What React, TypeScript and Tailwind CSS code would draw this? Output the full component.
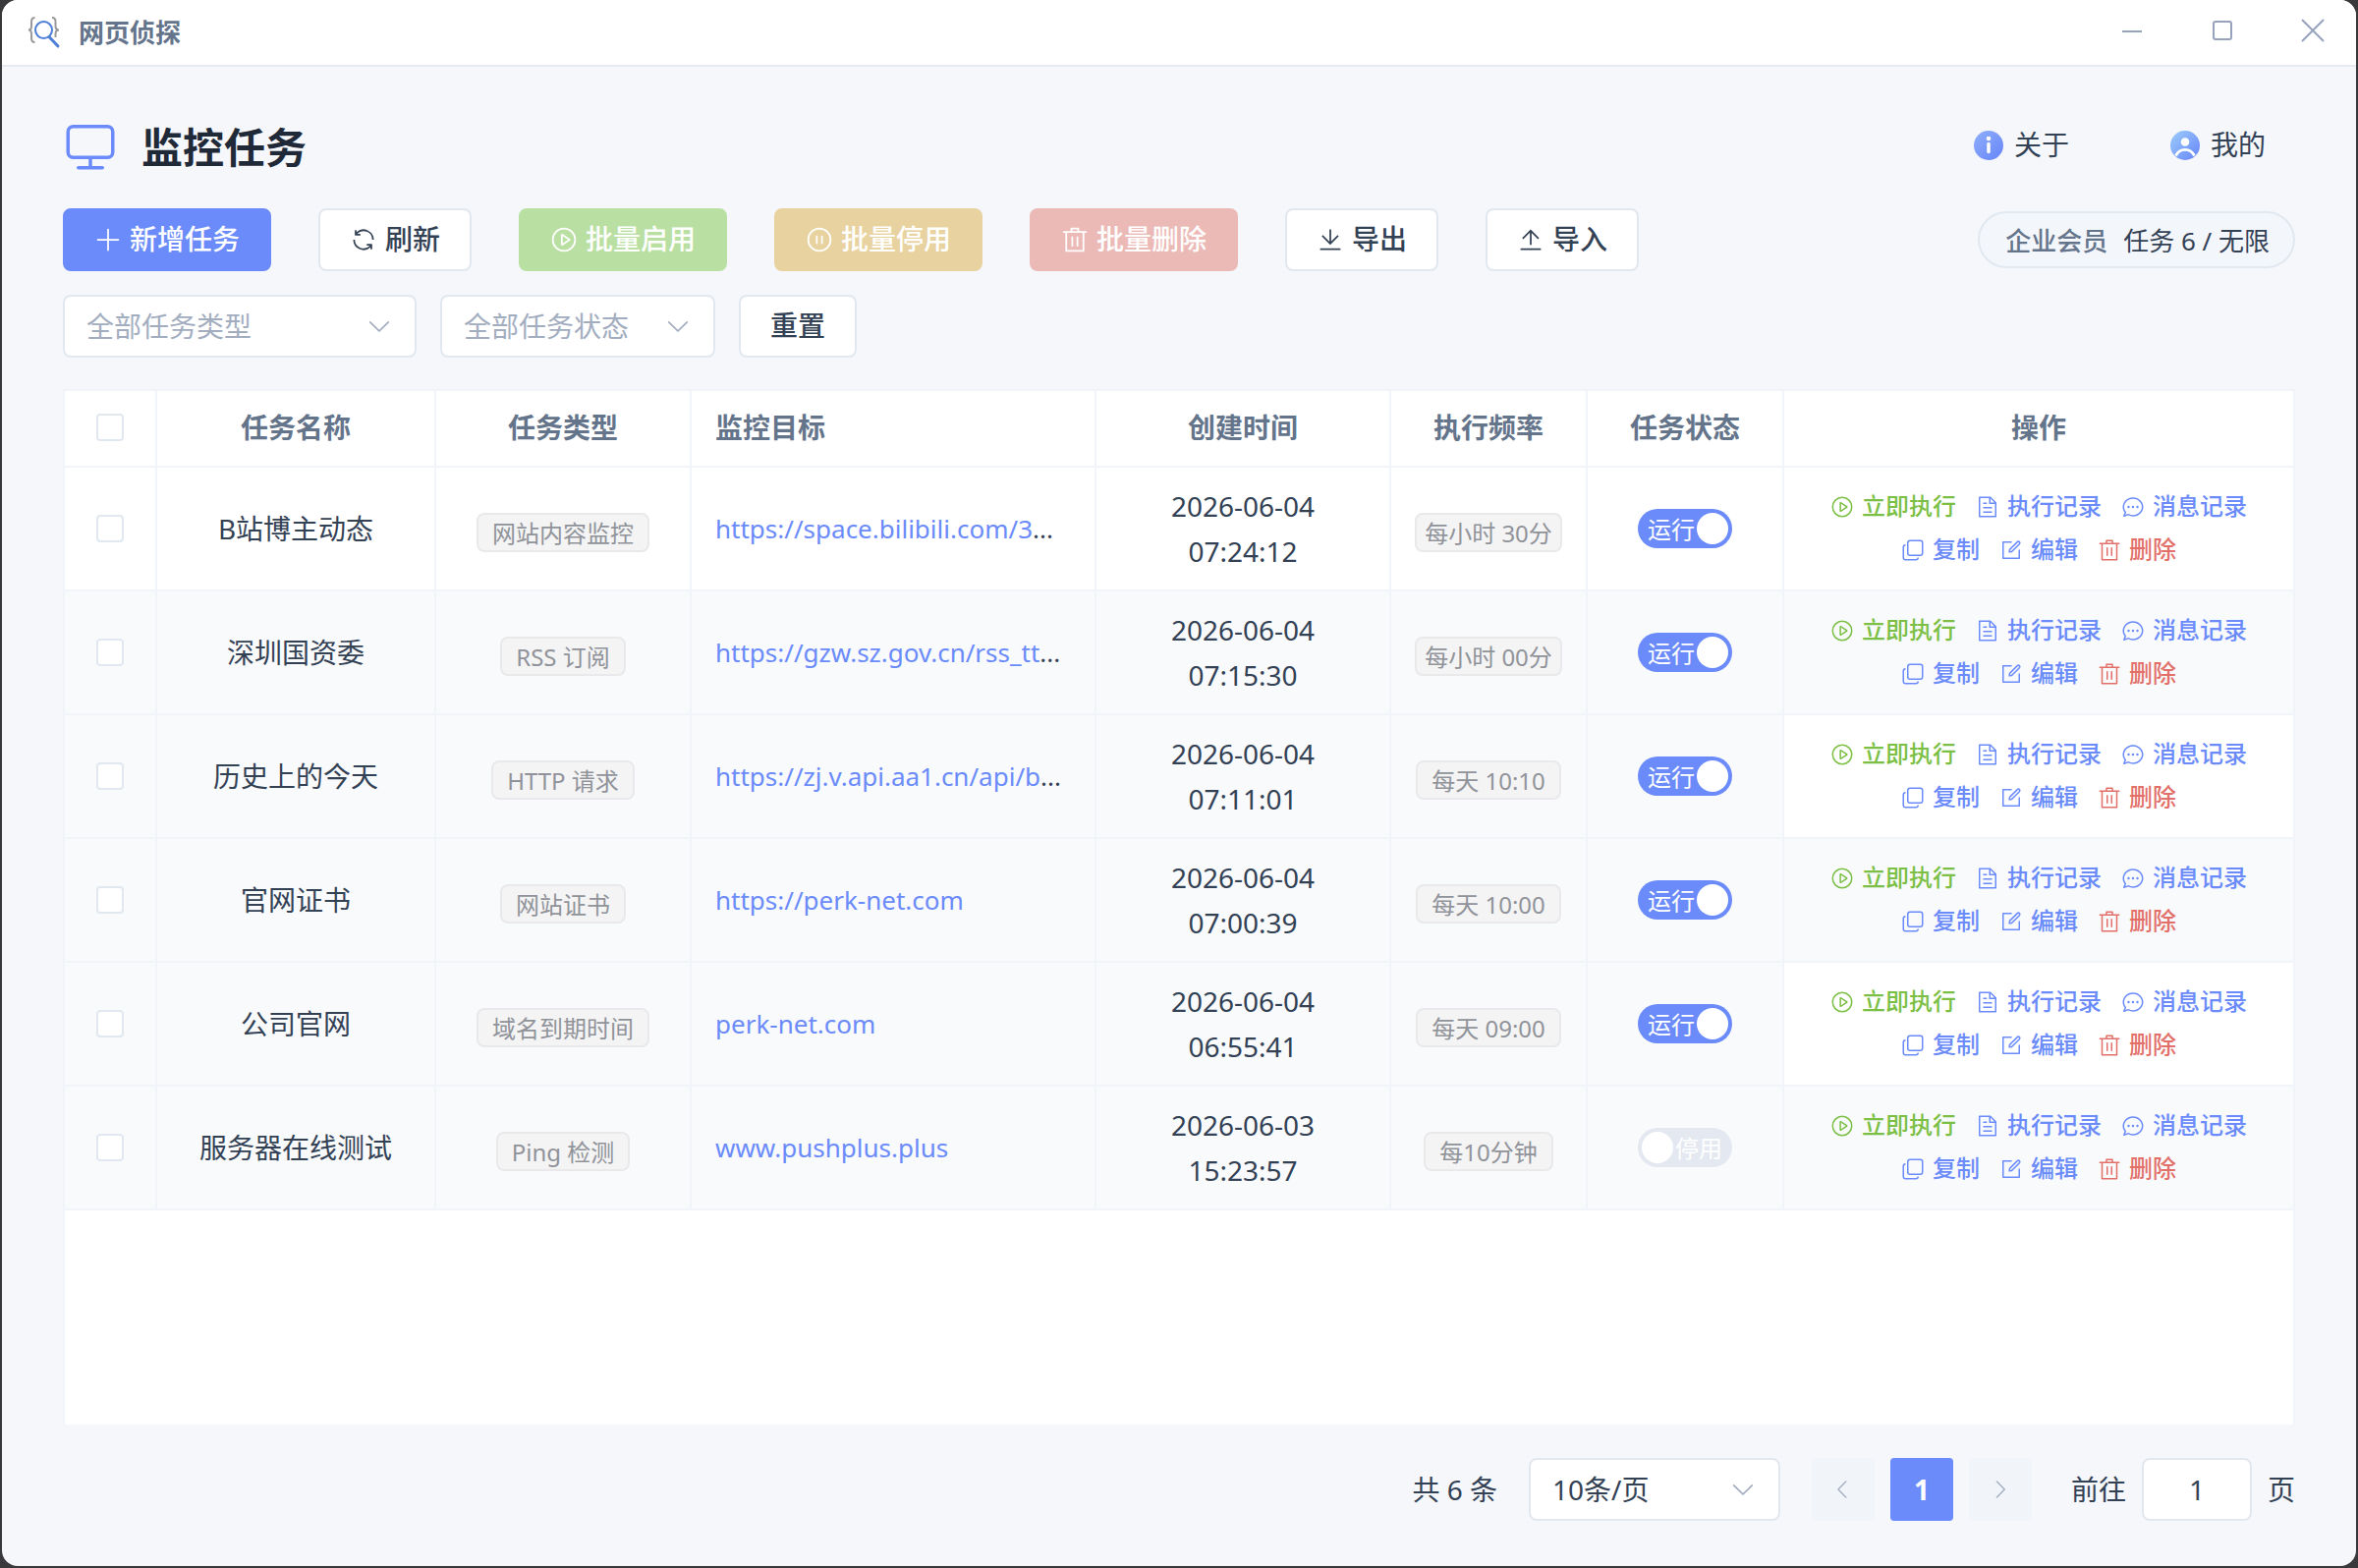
import { useState } from "react";

const ICONS = {
  plus: "M480 480V128a32 32 0 0 1 64 0v352h352a32 32 0 1 1 0 64H544v352a32 32 0 1 1-64 0V544H128a32 32 0 0 1 0-64z",
  refresh:
    "M771.776 794.88A384 384 0 0 1 128 512h64a320 320 0 0 0 555.712 216.448H654.72a32 32 0 1 1 0-64h149.056a32 32 0 0 1 32 32v148.928a32 32 0 1 1-64 0v-50.56zM276.288 295.616h92.992a32 32 0 0 1 0 64H220.16a32 32 0 0 1-32-32V178.56a32 32 0 0 1 64 0v50.56A384 384 0 0 1 896.128 512h-64a320 320 0 0 0-555.776-216.384z",
  play: "M512 64a448 448 0 1 1 0 896 448 448 0 0 1 0-896m0 832a384 384 0 0 0 0-768 384 384 0 0 0 0 768m-48-247.616L668.608 512 464 375.616zm10.624-342.656 249.472 166.336a48 48 0 0 1 0 79.872L474.624 718.272A48 48 0 0 1 400 678.336V345.6a48 48 0 0 1 74.624-39.936z",
  pause:
    "M512 64a448 448 0 1 1 0 896 448 448 0 0 1 0-896m0 832a384 384 0 0 0 0-768 384 384 0 0 0 0 768m-96-544q32 0 32 32v256q0 32-32 32t-32-32V384q0-32 32-32m192 0q32 0 32 32v256q0 32-32 32t-32-32V384q0-32 32-32",
  trash:
    "M160 256H96a32 32 0 0 1 0-64h256V95.936a32 32 0 0 1 32-32h256a32 32 0 0 1 32 32V192h256a32 32 0 1 1 0 64h-64v672a32 32 0 0 1-32 32H192a32 32 0 0 1-32-32zm448-64v-64H416v64zM224 896h576V256H224zm192-128a32 32 0 0 1-32-32V416a32 32 0 0 1 64 0v320a32 32 0 0 1-32 32m192 0a32 32 0 0 1-32-32V416a32 32 0 0 1 64 0v320a32 32 0 0 1-32 32",
  download:
    "M160 832h704a32 32 0 1 1 0 64H160a32 32 0 1 1 0-64m384-253.696 236.288-236.352 45.248 45.248L508.8 704 192 387.2l45.248-45.248L480 584.704V128h64z",
  upload:
    "M160 832h704a32 32 0 1 1 0 64H160a32 32 0 1 1 0-64m384-578.304V704h-64V247.296L237.248 490.048 192 444.8 508.8 128l316.8 316.8-45.312 45.248z",
  down: "M831.872 340.864 512 652.672 192.128 340.864a30.592 30.592 0 0 0-42.752 0 29.12 29.12 0 0 0 0 41.6L489.664 714.24a32 32 0 0 0 44.672 0l340.288-331.712a29.12 29.12 0 0 0 0-41.728 30.592 30.592 0 0 0-42.752 0z",
  left: "M609.408 149.376 277.76 489.6a32 32 0 0 0 0 44.672l331.648 340.352a29.12 29.12 0 0 0 41.728 0 30.592 30.592 0 0 0 0-42.752L339.264 511.936l311.872-319.872a30.592 30.592 0 0 0 0-42.688 29.12 29.12 0 0 0-41.728 0z",
  right:
    "M340.864 149.312a30.592 30.592 0 0 0 0 42.752L652.736 512 340.864 831.872a30.592 30.592 0 0 0 0 42.752 29.12 29.12 0 0 0 41.728 0L714.24 534.336a32 32 0 0 0 0-44.672L382.592 149.376a29.12 29.12 0 0 0-41.728 0z",
  monitor:
    "M544 768v128h192a32 32 0 1 1 0 64H288a32 32 0 1 1 0-64h192V768H192A128 128 0 0 1 64 640V256a128 128 0 0 1 128-128h640a128 128 0 0 1 128 128v384a128 128 0 0 1-128 128zM192 192a64 64 0 0 0-64 64v384a64 64 0 0 0 64 64h640a64 64 0 0 0 64-64V256a64 64 0 0 0-64-64z",
  document:
    "M832 384H576V128H192v768h640zm-26.496-64L640 154.496V320zM160 64h480l256 256v608a32 32 0 0 1-32 32H160a32 32 0 0 1-32-32V96a32 32 0 0 1 32-32m160 448h384v64H320zm0-192h160v64H320zm0 384h384v64H320z",
  chat: "m174.72 855.68 135.296-45.12 23.68 11.84C388.096 849.536 448.576 864 512 864c211.84 0 384-166.784 384-352S723.84 160 512 160 128 326.784 128 512c0 69.12 24.96 139.264 70.848 199.232l22.08 28.8-46.272 115.584zm-45.248 82.56A32 32 0 0 1 89.6 896l58.368-145.92C94.72 680.32 64 596.864 64 512 64 299.904 256 96 512 96s448 203.904 448 416-192 416-448 416a461.06 461.06 0 0 1-206.912-48.384l-175.616 58.56zM512 563.2a51.2 51.2 0 1 1 0-102.4 51.2 51.2 0 0 1 0 102.4m192 0a51.2 51.2 0 1 1 0-102.4 51.2 51.2 0 0 1 0 102.4m-384 0a51.2 51.2 0 1 1 0-102.4 51.2 51.2 0 0 1 0 102.4",
  copy: "M768 832a128 128 0 0 1-128 128H192A128 128 0 0 1 64 832V384a128 128 0 0 1 128-128v64a64 64 0 0 0-64 64v448a64 64 0 0 0 64 64h448a64 64 0 0 0 64-64zM384 128a64 64 0 0 0-64 64v448a64 64 0 0 0 64 64h448a64 64 0 0 0 64-64V192a64 64 0 0 0-64-64zm0-64h448a128 128 0 0 1 128 128v448a128 128 0 0 1-128 128H384a128 128 0 0 1-128-128V192A128 128 0 0 1 384 64",
  edit: "M832 512a32 32 0 1 1 64 0v352a32 32 0 0 1-32 32H160a32 32 0 0 1-32-32V160a32 32 0 0 1 32-32h352a32 32 0 0 1 0 64H192v640h640zM469.952 554.24l52.8-7.552L847.104 222.4a32 32 0 1 0-45.248-45.248L477.44 501.44l-7.552 52.8zm422.4-422.4a96 96 0 0 1 0 135.808l-331.84 331.84a32 32 0 0 1-18.112 9.088L436.8 623.68a32 32 0 0 1-36.224-36.224l15.104-105.6a32 32 0 0 1 9.024-18.112l331.904-331.84a96 96 0 0 1 135.744 0z",
};

type IconName = keyof typeof ICONS;

function Icon({ name, className }: { name: IconName; className: string }) {
  return (
    <svg viewBox="0 0 1024 1024" fill="currentColor" aria-hidden="true" className={`shrink-0 ${className}`}>
      <path d={ICONS[name]} />
    </svg>
  );
}

const tasks = [
  { name: "B站博主动态", type: "网站内容监控", target: "https://space.bilibili.com/3", cut: true, date: "2026-06-04", time: "07:24:12", freq: "每小时 30分", on: true },
  { name: "深圳国资委", type: "RSS 订阅", target: "https://gzw.sz.gov.cn/rss_tt", cut: true, date: "2026-06-04", time: "07:15:30", freq: "每小时 00分", on: true },
  { name: "历史上的今天", type: "HTTP 请求", target: "https://zj.v.api.aa1.cn/api/b", cut: true, date: "2026-06-04", time: "07:11:01", freq: "每天 10:10", on: true },
  { name: "官网证书", type: "网站证书", target: "https://perk-net.com", cut: false, date: "2026-06-04", time: "07:00:39", freq: "每天 10:00", on: true },
  { name: "公司官网", type: "域名到期时间", target: "perk-net.com", cut: false, date: "2026-06-04", time: "06:55:41", freq: "每天 09:00", on: true },
  { name: "服务器在线测试", type: "Ping 检测", target: "www.pushplus.plus", cut: false, date: "2026-06-03", time: "15:23:57", freq: "每10分钟", on: false },
];

const actions: { icon: IconName; label: string; color: string }[] = [
  { icon: "play", label: "立即执行", color: "text-[#7bbf45]" },
  { icon: "document", label: "执行记录", color: "text-[#6a8bf9]" },
  { icon: "chat", label: "消息记录", color: "text-[#6a8bf9]" },
  { icon: "copy", label: "复制", color: "text-[#6a8bf9]" },
  { icon: "edit", label: "编辑", color: "text-[#6a8bf9]" },
  { icon: "trash", label: "删除", color: "text-[#e26f68]" },
];

const toolbar: { icon: IconName; label: string; style: string; disabled?: boolean }[] = [
  { icon: "plus", label: "新增任务", style: "border-[#6a8bf9] bg-[#6a8bf9] text-white" },
  { icon: "refresh", label: "刷新", style: "border-[#e2e8f0] bg-white text-[#334155]" },
  { icon: "play", label: "批量启用", style: "border-[#badfa3] bg-[#badfa3] text-white", disabled: true },
  { icon: "pause", label: "批量停用", style: "border-[#e8d2a0] bg-[#e8d2a0] text-white", disabled: true },
  { icon: "trash", label: "批量删除", style: "border-[#ebbab7] bg-[#ebbab7] text-white", disabled: true },
  { icon: "download", label: "导出", style: "border-[#e2e8f0] bg-white text-[#334155]" },
  { icon: "upload", label: "导入", style: "border-[#e2e8f0] bg-white text-[#334155]" },
];

const TH = "h-[78px] border-r-2 border-b-2 border-[#f1f5fa] px-6 pt-0 pb-[2px] font-bold last:border-r-0";
const TD = "h-[126px] border-r-2 border-b-2 border-[#f1f5fa] px-6 py-0 text-center last:border-r-0";

function Checkbox({ label }: { label: string }) {
  return (
    <input
      type="checkbox"
      aria-label={label}
      className="mx-auto block size-7 appearance-none rounded border-2 border-[#e2e8f0] bg-white checked:border-[#6a8bf9] checked:bg-[#6a8bf9]"
    />
  );
}

function Tag({ children }: { children: string }) {
  return (
    <span className="mt-2 inline-flex h-10 max-w-full items-center justify-center rounded-lg border-2 border-[#e9e9eb] bg-[#f4f4f5] px-[14px] pt-[2px] text-2xl leading-none whitespace-nowrap text-[#909399]">
      {children}
    </span>
  );
}

function Select({ label, options, className }: { label: string; options: string[]; className: string }) {
  return (
    <div className="relative">
      <select
        aria-label={label}
        className={`h-16 appearance-none rounded-lg border-2 border-[#e2e8f0] bg-white pr-14 pl-[22px] text-[28px] ${className}`}
      >
        {options.map((o) => (
          <option key={o}>{o}</option>
        ))}
      </select>
      <Icon name="down" className="pointer-events-none absolute top-[18px] right-6 size-7 text-[#a3adc0]" />
    </div>
  );
}

function Switch({ on, onToggle, label }: { on: boolean; onToggle: () => void; label: string }) {
  return (
    <button
      type="button"
      role="switch"
      aria-checked={on}
      aria-label={label}
      onClick={onToggle}
      className={`mx-auto flex h-10 w-24 items-center rounded-full px-1 text-2xl leading-none text-white ${on ? "flex-row-reverse bg-[#6a8bf9]" : "bg-[#e4e8f0]"}`}
    >
      <span className="size-8 shrink-0 rounded-full bg-white" />
      <span className={`flex-1 pt-[2px] text-center whitespace-nowrap ${on ? "pl-1" : "pr-1"}`}>{on ? "运行" : "停用"}</span>
    </button>
  );
}

function TitleBar() {
  return (
    <header className="flex h-[68px] shrink-0 items-center border-b-2 border-[#e6eaf2] bg-white pr-7 pl-[26px]">
      <svg viewBox="0 0 34 34" fill="none" aria-hidden="true" className="size-[34px]">
        <path
          d="M7.5 2C4.5 2 4 3.5 4 6v4.5c0 2.5-.8 4-3 4 2.200 0 3 1.500 3 4V23c0 2.500.5 4 3.500 4M25 2c3 0 3.500 1.500 3.500 4v4.500c0 2.500.8 4 3.500 4-2.700 0-3.500 1.500-3.500 4V22"
          stroke="#9a9a9c"
          strokeWidth="2"
        />
        <circle cx="16.500" cy="14.500" r="8.500" stroke="#4d7fd6" strokeWidth="2" />
        <path d="M22 21.500l9 9.500" stroke="#4d7fd6" strokeWidth="3" strokeLinecap="round" />
      </svg>
      <span className="ml-[18px] text-[26px] font-semibold text-[#64748b]">网页侦探</span>
      <div className="ml-auto flex gap-[60px] pb-1 text-[#97a3bd]">
        <button type="button" aria-label="最小化" className="size-8">
          <svg viewBox="0 0 32 32" fill="none" stroke="currentColor" strokeWidth="2"><path d="M6 17h20" /></svg>
        </button>
        <button type="button" aria-label="最大化" className="size-8">
          <svg viewBox="0 0 32 32" fill="none" stroke="currentColor" strokeWidth="2"><rect x="7" y="7" width="18" height="18" rx="2" /></svg>
        </button>
        <button type="button" aria-label="关闭" className="size-8">
          <svg viewBox="0 0 32 32" fill="none" stroke="currentColor" strokeWidth="2"><path d="M5 5l22 22M27 5L5 27" /></svg>
        </button>
      </div>
    </header>
  );
}

export default function App() {
  const [states, setStates] = useState(tasks.map((t) => t.on));
  const toggle = (i: number) => setStates(states.map((s, n) => (n === i ? !s : s)));

  return (
    <div className="h-screen bg-[#39393b] px-[2px] pb-[2px] font-['Noto_Sans','Noto_Sans_CJK_SC',sans-serif] text-[28px] text-[#334155]">
      <div className="flex h-full flex-col overflow-hidden rounded-2xl bg-[#f5f7fb]">
        <TitleBar />
        <main className="flex min-h-0 flex-1 flex-col px-[62px] pb-[46px]">
          <div className="mt-[46px] flex h-[68px] items-center">
            <Icon name="monitor" className="size-14 text-[#6a8bf9]" />
            <h1 className="ml-6 pt-1 text-[42px] leading-none font-bold text-[#1f2937]">监控任务</h1>
            <nav className="ml-auto flex gap-[42px]">
              <button type="button" className="flex items-center gap-[10px] px-[30px]">
                <svg viewBox="0 0 32 32" aria-hidden="true" className="size-8">
                  <defs>
                    <linearGradient id="about" x1="0" y1="0" x2="1" y2="1">
                      <stop offset="0" stopColor="#8fb0fb" />
                      <stop offset="1" stopColor="#6684f8" />
                    </linearGradient>
                  </defs>
                  <circle cx="16" cy="16" r="15" fill="url(#about)" />
                  <circle cx="16" cy="9" r="2.300" fill="#fff" />
                  <path d="M16 14.500v8" stroke="#fff" strokeWidth="3.500" strokeLinecap="round" />
                </svg>
                <span className="pb-[2px]">关于</span>
              </button>
              <button type="button" className="flex items-center gap-[10px] px-[30px]">
                <svg viewBox="0 0 32 32" aria-hidden="true" className="size-8">
                  <defs>
                    <linearGradient id="mine" x1="0" y1="0" x2="1" y2="1">
                      <stop offset="0" stopColor="#9dcdfb" />
                      <stop offset="1" stopColor="#6684f8" />
                    </linearGradient>
                  </defs>
                  <circle cx="16" cy="16" r="15" fill="url(#mine)" />
                  <circle cx="16" cy="12.500" r="4.300" fill="#fff" />
                  <path d="M6.500 26.500c2-4 5.500-6.200 9.500-6.200s7.500 2.200 9.500 6.200" fill="none" stroke="#fff" strokeWidth="2.800" />
                </svg>
                <span className="pb-[2px]">我的</span>
              </button>
            </nav>
          </div>

          <div className="mt-[30px] flex items-center gap-12">
            {toolbar.map((b) => (
              <button
                key={b.label}
                type="button"
                disabled={b.disabled}
                className={`flex h-16 items-center gap-2 rounded-lg border-2 px-[30px] font-medium whitespace-nowrap ${b.style}`}
              >
                <Icon name={b.icon} className="size-7" />
                <span className="pb-[2px]">{b.label}</span>
              </button>
            ))}
            <div className="ml-auto flex h-[58px] items-center gap-4 rounded-full border-2 border-[#e2e8f0] bg-[#f3f6fb] pt-[2px] pr-6 pl-[26px] text-[26px] whitespace-nowrap">
              <span className="font-medium text-[#64748b]">企业会员</span>
              <span>任务 6 / 无限</span>
            </div>
          </div>

          <div className="mt-6 flex gap-6">
            <Select label="任务类型" options={["全部任务类型"]} className="w-[360px] text-[#a3adc0]" />
            <Select label="任务状态" options={["全部任务状态"]} className="w-[280px] text-[#a3adc0]" />
            <button type="button" className="h-16 rounded-lg border-2 border-[#e2e8f0] bg-white px-[30px] pb-[2px] font-medium">
              重置
            </button>
          </div>

          <div className="mt-8 min-h-0 flex-1 overflow-hidden border-x-2 border-t-2 border-[#f1f5fa] bg-white">
            <table className="w-full table-fixed border-separate border-spacing-0">
              <colgroup>
                <col className="w-[94px]" />
                <col className="w-[284px]" />
                <col className="w-[260px]" />
                <col className="w-[412px]" />
                <col className="w-[300px]" />
                <col className="w-[200px]" />
                <col className="w-[200px]" />
                <col />
              </colgroup>
              <thead className="text-[#64748b]">
                <tr>
                  <th className={TH}>
                    <Checkbox label="全选" />
                  </th>
                  <th className={TH}>任务名称</th>
                  <th className={TH}>任务类型</th>
                  <th className={`${TH} text-left`}>监控目标</th>
                  <th className={TH}>创建时间</th>
                  <th className={TH}>执行频率</th>
                  <th className={TH}>任务状态</th>
                  <th className={TH}>操作</th>
                </tr>
              </thead>
              <tbody>
                {tasks.map((t, i) => (
                  <tr key={t.name} className={i === 0 ? "bg-white" : "bg-[#f9fafc]"}>
                    <td className={TD}>
                      <Checkbox label={t.name} />
                    </td>
                    <td className={TD}>{t.name}</td>
                    <td className={TD}>
                      <Tag>{t.type}</Tag>
                    </td>
                    <td className="h-[126px] border-r-2 border-b-2 border-[#f1f5fa] px-6 py-0 text-[26px] whitespace-nowrap">
                      <a href={t.target} className="text-[#6a8bf9]">
                        {t.target}
                      </a>
                      {t.cut && "..."}
                    </td>
                    <td className={`${TD} leading-[46px]`}>
                      {t.date}
                      <br />
                      {t.time}
                    </td>
                    <td className={TD}>
                      <Tag>{t.freq}</Tag>
                    </td>
                    <td className={TD}>
                      <Switch on={states[i]} onToggle={() => toggle(i)} label={`${t.name} 状态`} />
                    </td>
                    <td className={`${TD} ${i % 2 === 0 ? "bg-white" : ""}`}>
                      <div className="flex flex-wrap justify-center gap-x-5 text-2xl font-medium">
                        {actions.map((a) => (
                          <button key={a.label} type="button" className={`flex h-11 items-center gap-2 ${a.color}`}>
                            <Icon name={a.icon} className="size-6" />
                            <span className="pb-[2px]">{a.label}</span>
                          </button>
                        ))}
                      </div>
                    </td>
                  </tr>
                ))}
              </tbody>
            </table>
          </div>

          <div className="mt-[34px] flex items-center justify-end">
            <span>共 6 条</span>
            <div className="ml-8">
              <Select label="每页条数" options={["10条/页"]} className="w-64" />
            </div>
            <div className="ml-8 flex gap-4">
              <button type="button" aria-label="上一页" className="grid size-16 place-items-center rounded bg-[#f1f5f9] text-[#a3adc0]">
                <Icon name="left" className="size-6" />
              </button>
              <button type="button" aria-current="page" className="size-16 rounded bg-[#6a8bf9] font-bold text-white">
                1
              </button>
              <button type="button" aria-label="下一页" className="grid size-16 place-items-center rounded bg-[#f1f5f9] text-[#a3adc0]">
                <Icon name="right" className="size-6" />
              </button>
            </div>
            <label htmlFor="page" className="ml-10">
              前往
            </label>
            <input id="page" defaultValue="1" className="mx-4 h-16 w-28 rounded-lg border-2 border-[#e2e8f0] bg-white text-center" />
            <span>页</span>
          </div>
        </main>
      </div>
    </div>
  );
}
